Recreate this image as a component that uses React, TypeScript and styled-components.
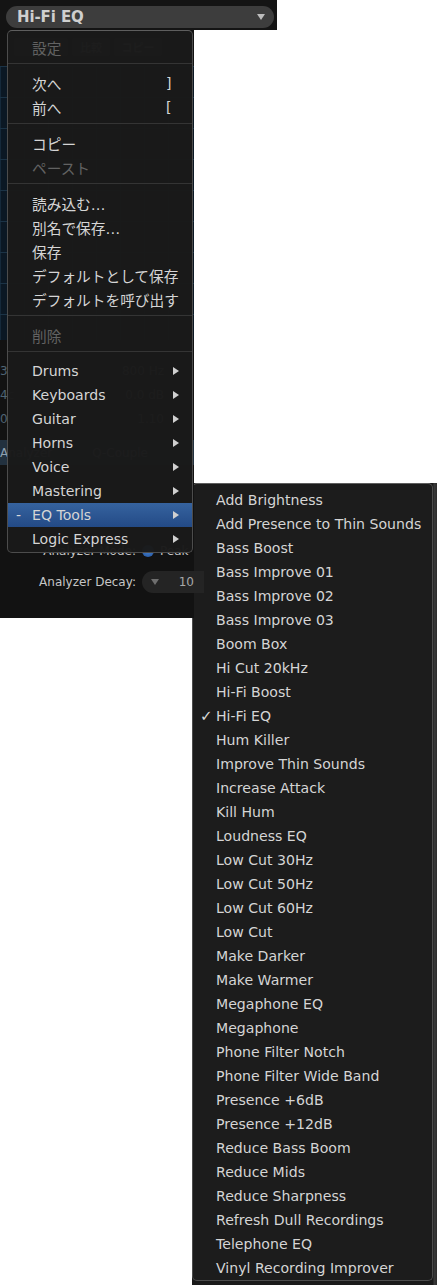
import React from 'react';
import styled, { createGlobalStyle } from 'styled-components';

const GlobalStyle = createGlobalStyle`
  html, body {
    margin: 0;
    padding: 0;
    background: #ffffff;
  }
  * {
    box-sizing: border-box;
  }
`;

const Page = styled.div`
  position: relative;
  width: 437px;
  height: 1285px;
  overflow: hidden;
  background: #ffffff;
  font-family: 'DejaVu Sans', 'Noto Sans CJK JP', sans-serif;
`;

const TopBar = styled.div`
  width: 277px;
  height: 30px;
  padding: 6px 3px 2px 6px;
  background: #141414;
`;

const Pill = styled.div`
  display: flex;
  align-items: center;
  justify-content: space-between;
  height: 22px;
  padding: 0 9px 0 11px;
  border-radius: 11px;
  background: #3d3d3d;
  color: #cfcfcf;
  font-weight: bold;
  font-size: 15px;
  letter-spacing: -0.1px;
`;

const Body = styled.div`
  display: flex;
  align-items: flex-start;
`;

const LeftPanel = styled.div`
  position: relative;
  flex-shrink: 0;
  display: flex;
  flex-direction: column;
  width: 194px;
  height: 588px;
  background: #121212;
`;

const Toolbar = styled.div`
  display: flex;
  gap: 4px;
  height: 18px;
  margin-top: 8px;
  padding-left: 14px;
`;

const ToolButton = styled.div<{ $w: number }>`
  display: flex;
  align-items: center;
  justify-content: center;
  width: ${(p) => p.$w}px;
  height: 18px;
  border-radius: 3px;
  background: #3a3a3a;
  color: #9a9a9a;
  font-size: 11px;
  font-weight: bold;
`;

const Graph = styled.div`
  height: 274px;
  margin-top: 10px;
  background-color: #0b1824;
  background-image: linear-gradient(#1b3346 1px, transparent 1px),
    linear-gradient(90deg, #15293a 1px, transparent 1px);
  background-size: 100% 31px, 24px 100%;
`;

const Params = styled.div`
  display: flex;
  flex-direction: column;
  margin-top: 19px;
`;

const ParamRow = styled.div`
  display: flex;
  align-items: center;
  justify-content: space-between;
  height: 24px;
  padding: 0 30px 0 0;
  color: #8a8a8a;
  font-size: 12px;
`;

const ParamEdge = styled.span`
  color: #4f6474;
`;

const AnalyzerBar = styled.div`
  display: flex;
  align-items: center;
  gap: 40px;
  height: 25px;
  margin-top: 9px;
  background: #22313f;
  color: #8fa0b0;
  font-size: 12px;
`;

const ControlRow = styled.div<{ $h: number; $mt: number }>`
  display: grid;
  grid-template-columns: 136px 1fr;
  align-items: center;
  column-gap: 6px;
  height: ${(p) => p.$h}px;
  margin-top: ${(p) => p.$mt}px;
  color: #c6c6c6;
  font-size: 12px;
`;

const ControlLabel = styled.span`
  text-align: right;
  white-space: nowrap;
`;

const RadioGroup = styled.div`
  display: flex;
  align-items: center;
  gap: 6px;
`;

const Radio = styled.span`
  width: 12px;
  height: 12px;
  border-radius: 50%;
  background: radial-gradient(circle at 50% 40%, #4d8ad8, #1f4f99);
`;

const Stepper = styled.div`
  display: flex;
  align-items: center;
  justify-content: space-between;
  height: 22px;
  margin-right: -10px;
  padding: 0 10px 0 9px;
  border-radius: 11px 0 0 11px;
  background: #242424;
  color: #a8a8a8;
`;

const Menu = styled.div`
  position: absolute;
  top: 0;
  left: 7px;
  width: 186px;
  padding: 4px 0 1px;
  border: 1px solid #4c4c4c;
  border-top-color: #5e5e5e;
  border-radius: 5px;
  background: rgba(26, 26, 26, 0.975);
`;

const Row = styled.div<{ $active?: boolean; $disabled?: boolean; $pad: number }>`
  display: flex;
  align-items: center;
  height: 24px;
  padding-left: ${(p) => p.$pad}px;
  color: ${(p) => (p.$disabled ? '#626262' : '#d5d5d5')};
  font-size: 14px;
  white-space: nowrap;
  background: ${(p) =>
    p.$active ? 'linear-gradient(#36639f, #234a86)' : 'transparent'};
`;

const Mark = styled.span<{ $check?: boolean }>`
  flex-shrink: 0;
  width: 16px;
  color: #dadada;
  font-size: ${(p) => (p.$check ? '15px' : '14px')};
  font-weight: ${(p) => (p.$check ? 'bold' : 'normal')};
`;

const Label = styled.span<{ $cjk?: boolean }>`
  flex: 1;
  font-size: ${(p) => (p.$cjk ? '14.7px' : '14.1px')};
`;

const Shortcut = styled.span`
  width: 26px;
  color: #d5d5d5;
`;

const ArrowBox = styled.span`
  display: flex;
  width: 19px;
`;

const Separator = styled.div`
  height: 12px;
  padding-top: 4px;

  &::before {
    content: '';
    display: block;
    height: 1px;
    background: #343434;
  }
`;

const RightCol = styled.div`
  flex: 1;
  margin-top: 453px;
  margin-left: -2px;
`;

const BackWindow = styled.div`
  height: 802px;
  padding-right: 4px;
  background: linear-gradient(90deg, #1a1a1a 0, #1a1a1a 241px, #3a3a3a 242px, #2c2c2c 100%);
`;

const SubMenu = styled.div`
  width: 241px;
  height: 798px;
  padding-top: 4px;
  border: 1px solid #4c4c4c;
  border-top-color: #5e5e5e;
  border-radius: 5px;
  background: #1c1c1c;
`;

type Entry =
  | 'sep'
  | {
      label: string;
      cjk?: boolean;
      disabled?: boolean;
      shortcut?: string;
      sub?: boolean;
      active?: boolean;
    };

const menuEntries: Entry[] = [
  { label: '設定', cjk: true, disabled: true },
  'sep',
  { label: '次へ', cjk: true, shortcut: ']' },
  { label: '前へ', cjk: true, shortcut: '[' },
  'sep',
  { label: 'コピー', cjk: true },
  { label: 'ペースト', cjk: true, disabled: true },
  'sep',
  { label: '読み込む…', cjk: true },
  { label: '別名で保存…', cjk: true },
  { label: '保存', cjk: true },
  { label: 'デフォルトとして保存', cjk: true },
  { label: 'デフォルトを呼び出す', cjk: true },
  'sep',
  { label: '削除', cjk: true, disabled: true },
  'sep',
  { label: 'Drums', sub: true },
  { label: 'Keyboards', sub: true },
  { label: 'Guitar', sub: true },
  { label: 'Horns', sub: true },
  { label: 'Voice', sub: true },
  { label: 'Mastering', sub: true },
  { label: 'EQ Tools', sub: true, active: true },
  { label: 'Logic Express', sub: true },
];

const presets = [
  'Add Brightness',
  'Add Presence to Thin Sounds',
  'Bass Boost',
  'Bass Improve 01',
  'Bass Improve 02',
  'Bass Improve 03',
  'Boom Box',
  'Hi Cut 20kHz',
  'Hi-Fi Boost',
  'Hi-Fi EQ',
  'Hum Killer',
  'Improve Thin Sounds',
  'Increase Attack',
  'Kill Hum',
  'Loudness EQ',
  'Low Cut 30Hz',
  'Low Cut 50Hz',
  'Low Cut 60Hz',
  'Low Cut',
  'Make Darker',
  'Make Warmer',
  'Megaphone EQ',
  'Megaphone',
  'Phone Filter Notch',
  'Phone Filter Wide Band',
  'Presence +6dB',
  'Presence +12dB',
  'Reduce Bass Boom',
  'Reduce Mids',
  'Reduce Sharpness',
  'Refresh Dull Recordings',
  'Telephone EQ',
  'Vinyl Recording Improver',
];

const selectedPreset = 'Hi-Fi EQ';

const DownTriangle = ({ color = '#bdbdbd' }: { color?: string }) => (
  <svg width="8" height="6" viewBox="0 0 8 6">
    <polygon points="0,0 8,0 4,6" fill={color} />
  </svg>
);

const RightTriangle = () => (
  <svg width="6" height="8" viewBox="0 0 6 8">
    <polygon points="0,0 6,4 0,8" fill="#d0d0d0" />
  </svg>
);

const PresetMenu = () => (
  <Menu>
    {menuEntries.map((e, i) =>
      e === 'sep' ? (
        <Separator key={i} />
      ) : (
        <Row key={i} $pad={8} $active={e.active} $disabled={e.disabled}>
          <Mark>{e.active ? '-' : ''}</Mark>
          <Label $cjk={e.cjk}>{e.label}</Label>
          {e.shortcut && <Shortcut>{e.shortcut}</Shortcut>}
          {e.sub && (
            <ArrowBox>
              <RightTriangle />
            </ArrowBox>
          )}
        </Row>
      ),
    )}
  </Menu>
);

export default function App() {
  return (
    <Page>
      <GlobalStyle />
      <TopBar>
        <Pill>
          <span>Hi-Fi EQ</span>
          <DownTriangle />
        </Pill>
      </TopBar>
      <Body>
        <LeftPanel>
          <Toolbar>
            <ToolButton $w={54}>◀ ▶</ToolButton>
            <ToolButton $w={38}>比較</ToolButton>
            <ToolButton $w={48}>コピー</ToolButton>
          </Toolbar>
          <Graph />
          <Params>
            <ParamRow>
              <ParamEdge>3</ParamEdge>
              <span>800 Hz</span>
            </ParamRow>
            <ParamRow>
              <ParamEdge>4c</ParamEdge>
              <span>0.0 dB</span>
            </ParamRow>
            <ParamRow>
              <ParamEdge>0</ParamEdge>
              <span>1.10</span>
            </ParamRow>
          </Params>
          <AnalyzerBar>
            <span>Analyzer</span>
            <span>Q-Couple</span>
          </AnalyzerBar>
          <ControlRow $h={20} $mt={76}>
            <ControlLabel>Analyzer Mode:</ControlLabel>
            <RadioGroup>
              <Radio />
              <span>Peak</span>
            </RadioGroup>
          </ControlRow>
          <ControlRow $h={22} $mt={10}>
            <ControlLabel>Analyzer Decay:</ControlLabel>
            <Stepper>
              <DownTriangle color="#6e6e6e" />
              <span>10</span>
            </Stepper>
          </ControlRow>
          <PresetMenu />
        </LeftPanel>
        <RightCol>
          <BackWindow>
            <SubMenu>
              {presets.map((name) => (
                <Row key={name} $pad={7}>
                  <Mark $check>{name === selectedPreset ? '✓' : ''}</Mark>
                  <Label>{name}</Label>
                </Row>
              ))}
            </SubMenu>
          </BackWindow>
        </RightCol>
      </Body>
    </Page>
  );
}
